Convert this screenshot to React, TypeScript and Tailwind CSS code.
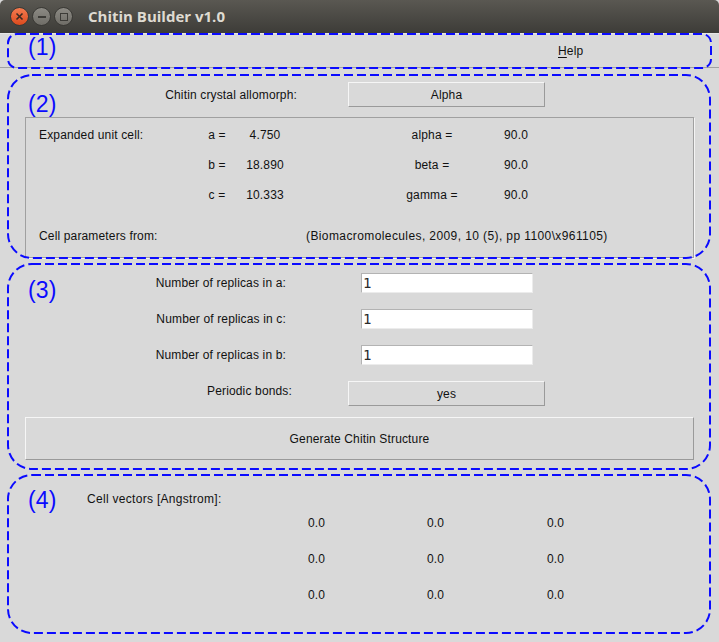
import React from 'react';

const sans = "font-['Liberation_Sans',Arial,sans-serif]";

const RaisedButton: React.FC<{ label: string; className?: string }> = ({ label, className }) => (
  <div
    className={`flex items-center justify-center bg-[#d9d9d9] border border-t-[#f6f6f6] border-l-[#f6f6f6] border-b-[#9a9a9a] border-r-[#9a9a9a] text-[12px] text-[#111] ${className ?? ''}`}
  >
    {label}
  </div>
);

const Entry: React.FC<{ value: string }> = ({ value }) => (
  <div className="w-[172px] h-[20px] bg-white border border-t-[#b3b3b3] border-l-[#b3b3b3] border-b-[#ececec] border-r-[#ececec] pl-[1px] flex items-center font-['DejaVu_Sans_Mono',monospace] text-[14px] leading-none text-[#2a2a2a]">
    {value}
  </div>
);

const WindowButtons: React.FC = () => (
  <div className="flex items-center gap-[3px] pl-[10px]">
    <div className="w-[19px] h-[19px] rounded-full bg-gradient-to-b from-[#f47a4e] to-[#dc4a1c] border border-[#3a3935] flex items-center justify-center">
      <svg width="9" height="9" viewBox="0 0 9 9">
        <path d="M1.5 1.5 L7.5 7.5 M7.5 1.5 L1.5 7.5" stroke="#3b2a22" strokeWidth="1.6" />
      </svg>
    </div>
    <div className="w-[19px] h-[19px] rounded-full bg-gradient-to-b from-[#8c8a84] to-[#6f6d67] border border-[#3a3935] flex items-center justify-center">
      <div className="w-[8px] h-[2px] bg-[#3c3b37]" />
    </div>
    <div className="w-[19px] h-[19px] rounded-full bg-gradient-to-b from-[#8c8a84] to-[#6f6d67] border border-[#3a3935] flex items-center justify-center">
      <div className="w-[8px] h-[8px] border-[1.5px] border-[#3c3b37]" />
    </div>
  </div>
);

const Annotations: React.FC = () => (
  <div className="absolute inset-0 pointer-events-none">
    <svg width="719" height="642" className="absolute top-0 left-0">
      <g fill="none" stroke="#0b0bff" strokeWidth="2" strokeDasharray="9 4">
        <rect x="8" y="34" width="703" height="34" rx="9" />
        <rect x="8" y="75" width="702" height="183" rx="24" />
        <rect x="8" y="264" width="702" height="205" rx="24" />
        <rect x="8" y="475" width="702" height="158" rx="24" />
      </g>
    </svg>
    <span className={`absolute left-[28px] top-[36px] ${sans} text-[23px] leading-[23px] text-[#0b0bff]`}>(1)</span>
    <span className={`absolute left-[28px] top-[93px] ${sans} text-[23px] leading-[23px] text-[#0b0bff]`}>(2)</span>
    <span className={`absolute left-[28px] top-[279px] ${sans} text-[23px] leading-[23px] text-[#0b0bff]`}>(3)</span>
    <span className={`absolute left-[28px] top-[489px] ${sans} text-[23px] leading-[23px] text-[#0b0bff]`}>(4)</span>
  </div>
);

const cellRows = [
  { k: 'a =', v: '4.750', ak: 'alpha =', av: '90.0' },
  { k: 'b =', v: '18.890', ak: 'beta =', av: '90.0' },
  { k: 'c =', v: '10.333', ak: 'gamma =', av: '90.0' },
];

const App: React.FC = () => {
  return (
    <div className={`relative w-[719px] h-[642px] overflow-hidden bg-[#d9d9d9] ${sans} text-[12px] tracking-[0.15px] text-[#111]`}>
      {/* title bar */}
      <div className="h-[33px] flex items-center bg-gradient-to-b from-[#5a5852] to-[#3d3c38] rounded-t-[5px] tracking-normal">
        <WindowButtons />
        <span className="ml-[15px] font-['Open_Sans',sans-serif] font-bold text-[15px] text-[#dfdbd2]">Chitin Builder v1.0</span>
      </div>

      {/* menu */}
      <div className="h-[35px] flex items-center border-b border-[#a2a2a2] border-t border-t-[#e6e6e6]">
        <span className="ml-[558px]">
          <span className="underline underline-offset-2">H</span>elp
        </span>
      </div>

      {/* (2) */}
      <div className="h-[195px] pt-[14px]">
        <div className="flex items-center h-[25px]">
          <span className="w-[297px] text-right">Chitin crystal allomorph:</span>
          <RaisedButton label="Alpha" className="ml-[51px] w-[197px] h-[25px]" />
        </div>
        <div className="ml-[25px] mt-[10px] w-[669px] h-[141px] border border-[#a0a0a0] shadow-[1px_1px_0_#f4f4f4] pt-[2px]">
          <div className="grid grid-cols-[166px_50px_46px_104px_80px_88px]">
            {cellRows.map((r, i) => (
              <React.Fragment key={r.k}>
                <span className="h-[30px] leading-[30px] pl-[13px]">{i === 0 ? 'Expanded unit cell:' : ''}</span>
                <span className="h-[30px] leading-[30px] text-center">{r.k}</span>
                <span className="h-[30px] leading-[30px] text-center">{r.v}</span>
                <span />
                <span className="h-[30px] leading-[30px] text-center">{r.ak}</span>
                <span className="h-[30px] leading-[30px] text-center">{r.av}</span>
              </React.Fragment>
            ))}
          </div>
          <div className="flex mt-[11px] h-[30px] items-center">
            <span className="w-[280px] pl-[13px]">Cell parameters from:</span>
            <span className="tracking-[0.4px]">(Biomacromolecules, 2009, 10 (5), pp 1100\x961105)</span>
          </div>
        </div>
      </div>

      {/* (3) */}
      <div className="h-[209px] pt-[10px]">
        <div className="flex items-center h-[20px]">
          <span className="w-[286px] text-right">Number of replicas in a:</span>
          <div className="ml-[75px]"><Entry value="1" /></div>
        </div>
        <div className="flex items-center h-[20px] mt-[16px]">
          <span className="w-[286px] text-right">Number of replicas in c:</span>
          <div className="ml-[75px]"><Entry value="1" /></div>
        </div>
        <div className="flex items-center h-[20px] mt-[16px]">
          <span className="w-[286px] text-right">Number of replicas in b:</span>
          <div className="ml-[75px]"><Entry value="1" /></div>
        </div>
        <div className="flex items-center h-[25px] mt-[16px]">
          <span className="w-[292px] text-right -mt-[5px]">Periodic bonds:</span>
          <RaisedButton label="yes" className="ml-[56px] w-[197px] h-[25px]" />
        </div>
        <RaisedButton label="Generate Chitin Structure" className="ml-[25px] mt-[11px] w-[669px] h-[43px]" />
      </div>

      {/* (4) */}
      <div className="pt-[19px]">
        <div className="pl-[87px] leading-[16px] tracking-[0.3px]">Cell vectors [Angstrom]:</div>
        <div className="grid grid-cols-[119px_120px_60px] pl-[308px] -mt-[1px]">
          {Array.from({ length: 9 }).map((_, i) => (
            <span key={i} className="h-[36px] leading-[34px]">0.0</span>
          ))}
        </div>
      </div>

      <Annotations />
    </div>
  );
};

export default App;
